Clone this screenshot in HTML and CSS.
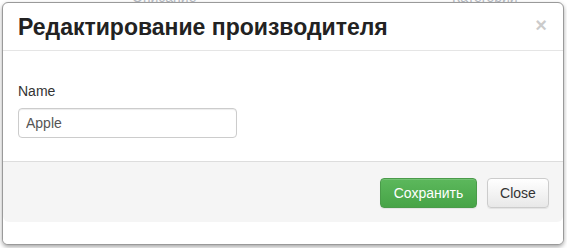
FILE: index.html
```html
<!DOCTYPE html>
<html>
<head>
<meta charset="utf-8">
<link rel="stylesheet" href="styles.css">
</head>
<body>
<div class="page">
  <div class="backdrop-text">
    <span class="bg-a">Описание</span>
    <span class="bg-b">Категории</span>
  </div>
  <div class="modal">
    <div class="modal-header">
      <h3 class="title">Редактирование производителя</h3>
      <span class="close">×</span>
    </div>
    <div class="modal-body">
      <label class="label">Name</label>
      <input class="input" type="text" value="Apple">
    </div>
    <div class="modal-footer">
      <button class="btn btn-success">Сохранить</button>
      <button class="btn btn-default">Close</button>
    </div>
    <div class="modal-tail"></div>
  </div>
</div>
</body>
</html>
```
FILE: styles.css
```css
html, body {
  margin: 0;
  padding: 0;
  background: #fff;
  font-family: "Liberation Sans", Arial, sans-serif;
  color: #333;
}
.page {
  position: relative;
  width: 567px;
  height: 248px;
  overflow: hidden;
}
.backdrop-text {
  position: absolute;
  top: -11px;
  left: 0;
  width: 567px;
  font-size: 14px;
  color: #b8bcc4;
}
.bg-a { position: absolute; left: 132px; }
.bg-b { position: absolute; left: 452px; }
.modal {
  position: absolute;
  left: 2px;
  top: 2px;
  width: 560px;
  height: 241px;
  background: #fff;
  border: 1px solid #9a9a9a;
  border-radius: 6px;
  box-shadow: 0 2px 4px rgba(0,0,0,0.35);
  display: flex;
  flex-direction: column;
  overflow: hidden;
}
.modal-header {
  height: 48px;
  border-bottom: 1px solid #e5e5e5;
  display: flex;
  align-items: center;
  justify-content: space-between;
  padding: 0 16px 0 15px;
  box-sizing: border-box;
  flex-shrink: 0;
}
.title {
  margin: 0;
  font-size: 23px;
  font-weight: bold;
  color: #222;
  line-height: 30px;
  padding-top: 1px;
}
.close {
  font-size: 20px;
  font-weight: bold;
  color: #000;
  opacity: 0.2;
  line-height: 20px;
  margin-top: -4px;
}
.modal-body {
  height: 110px;
  box-sizing: border-box;
  padding: 30px 15px 0 15px;
  display: flex;
  flex-direction: column;
  align-items: flex-start;
  flex-shrink: 0;
}
.label {
  font-size: 14px;
  line-height: 20px;
  color: #333;
  margin-bottom: 7px;
}
.input {
  width: 219px;
  height: 30px;
  box-sizing: border-box;
  border: 1px solid #ccc;
  border-radius: 4px;
  padding: 4px 7px;
  font-family: "Liberation Sans", Arial, sans-serif;
  font-size: 14px;
  color: #555;
  box-shadow: inset 0 1px 1px rgba(0,0,0,0.075);
  margin: 0;
}
.modal-footer {
  height: 61px;
  box-sizing: border-box;
  border-top: 1px solid #ddd;
  background: #f5f5f5;
  border-radius: 0 0 6px 6px;
  display: flex;
  justify-content: flex-end;
  align-items: flex-start;
  padding: 16px 14px 0 0;
  gap: 10px;
  flex-shrink: 0;
}
.btn {
  height: 30px;
  box-sizing: border-box;
  font-family: "Liberation Sans", Arial, sans-serif;
  font-size: 14px;
  border-radius: 4px;
  padding: 0 12px;
  margin: 0;
  line-height: 28px;
}
.btn-success {
  width: 97px;
  color: #fff;
  border: 1px solid #4a9b4a;
  background: linear-gradient(#5cb85c, #47a447);
  box-shadow: inset 0 1px 0 rgba(255,255,255,0.15), 0 1px 1px rgba(0,0,0,0.075);
}
.btn-default {
  width: 62px;
  color: #333;
  border: 1px solid #ccc;
  background: linear-gradient(#fff, #e8e8e8);
  box-shadow: inset 0 1px 0 rgba(255,255,255,0.15), 0 1px 1px rgba(0,0,0,0.075);
}
.modal-tail {
  flex: 1;
  background: #fff;
}
```
